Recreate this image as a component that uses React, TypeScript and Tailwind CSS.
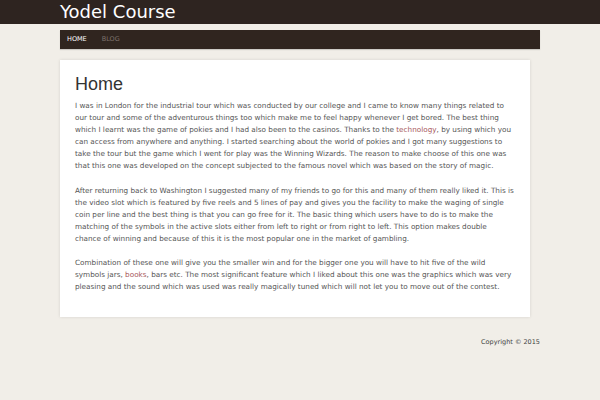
export default function App() {
  return (
    <div className="min-h-[400px] w-[600px] bg-[#f1eee8] font-['DejaVu_Sans',sans-serif]">
      <header className="h-[24px] bg-[#2e2420]">
        <div className="ml-[60px] w-[480px] text-[18px] leading-[23px] text-white">Yodel Course</div>
      </header>

      <div className="ml-[60px] w-[480px] pt-[6px]">
        <nav className="flex h-[19px] items-center gap-[15px] bg-[#30251f] pl-[7px] text-[6.5px] uppercase shadow-[0_1px_1px_rgba(0,0,0,0.15)]">
          <a className="text-white">Home</a>
          <a className="text-[#7d726c]">Blog</a>
        </nav>

        <main className="mt-[11px] w-[470px] bg-white px-[15px] pt-[12px] pb-[24px] text-[7.25px] leading-[12px] text-[#555] shadow-[0_0_3px_rgba(0,0,0,0.12)]">
          <h1 className="mb-[4px] font-['Liberation_Sans',sans-serif] text-[18px] leading-[24px] text-[#333]">Home</h1>
          <p className="mb-[12.5px]">
            I was in London for the industrial tour which was conducted by our college and I came to know many things related to our tour and some of the adventurous things too which make me to feel happy whenever I get bored. The best thing which I learnt was the game of pokies and I had also been to the casinos. Thanks to the <a className="text-[#a8595d]">technology</a>, by using which you can access from anywhere and anything. I started searching about the world of pokies and I got many suggestions to take the tour but the game which I went for play was the Winning Wizards. The reason to make choose of this one was that this one was developed on the concept subjected to the famous novel which was based on the story of magic.
          </p>
          <p className="mb-[12.5px]">
            After returning back to Washington I suggested many of my friends to go for this and many of them really liked it. This is the video slot which is featured by five reels and 5 lines of pay and gives you the facility to make the waging of single coin per line and the best thing is that you can go free for it. The basic thing which users have to do is to make the matching of the symbols in the active slots either from left to right or from right to left. This option makes double chance of winning and because of this it is the most popular one in the market of gambling.
          </p>
          <p>
            Combination of these one will give you the smaller win and for the bigger one you will have to hit five of the wild symbols jars, <a className="text-[#a8595d]">books</a>, bars etc. The most significant feature which I liked about this one was the graphics which was very pleasing and the sound which was used was really magically tuned which will not let you to move out of the contest.
          </p>
        </main>

        <footer className="pt-[20px] text-right text-[6.5px] leading-[10px] text-[#444]">Copyright © 2015</footer>
      </div>
    </div>
  )
}
